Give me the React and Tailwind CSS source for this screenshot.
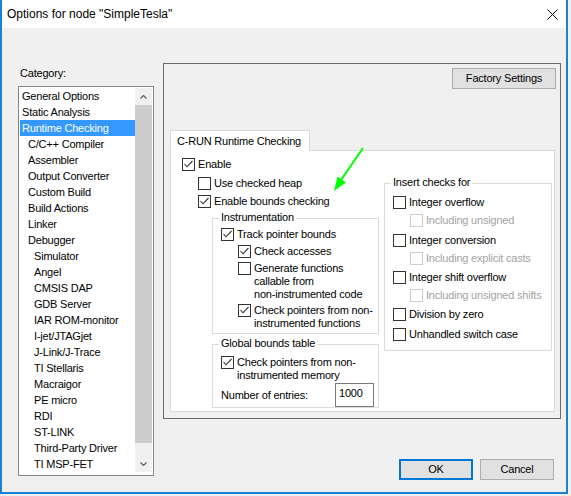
import clsx from 'clsx'

const categories = [
  ['General Options', 0],
  ['Static Analysis', 0],
  ['Runtime Checking', 0],
  ['C/C++ Compiler', 1],
  ['Assembler', 1],
  ['Output Converter', 1],
  ['Custom Build', 1],
  ['Build Actions', 1],
  ['Linker', 1],
  ['Debugger', 1],
  ['Simulator', 2],
  ['Angel', 2],
  ['CMSIS DAP', 2],
  ['GDB Server', 2],
  ['IAR ROM-monitor', 2],
  ['I-jet/JTAGjet', 2],
  ['J-Link/J-Trace', 2],
  ['TI Stellaris', 2],
  ['Macraigor', 2],
  ['PE micro', 2],
  ['RDI', 2],
  ['ST-LINK', 2],
  ['Third-Party Driver', 2],
  ['TI MSP-FET', 2],
]

const indent = ['pl-[2px]', 'pl-[8px]', 'pl-[14px]']

function Box({ checked, disabled }) {
  return (
    <span
      className={clsx(
        'flex h-[13px] w-[13px] shrink-0 items-center justify-center border bg-white',
        disabled ? 'border-[#cccccc]' : 'border-[#333333]'
      )}
    >
      {checked && (
        <svg width="11" height="11" viewBox="0 0 11 11">
          <path d="M1.5 5 L4 7.8 L9.5 2" fill="none" stroke="#333333" strokeWidth="1.1" />
        </svg>
      )}
    </span>
  )
}

function Check({ checked, disabled, className, children }) {
  return (
    <div className={clsx('flex h-[16px] items-center', className)}>
      <Box checked={checked} disabled={disabled} />
      <span className={clsx('ml-[3px] whitespace-nowrap', disabled && 'text-[#a3a3a3]')}>{children}</span>
    </div>
  )
}

// checkbox whose label runs over several lines
function CheckMulti({ checked, className, children }) {
  return (
    <div className={clsx('flex items-start leading-[13px]', className)}>
      <Box checked={checked} />
      <span className="ml-[3px] whitespace-nowrap">{children}</span>
    </div>
  )
}

function Group({ title, className, children }) {
  return (
    <div className={clsx('relative flex flex-col border border-[#dcdcdc]', className)}>
      <span className="absolute left-[6px] -top-[8px] bg-white px-[2px] leading-[13px]">{title}</span>
      {children}
    </div>
  )
}

function Chevron({ down }) {
  return (
    <svg width="7" height="4" viewBox="0 0 7 4" className={down ? 'rotate-180' : ''}>
      <path d="M0.5 3.5 L3.5 0.5 L6.5 3.5" fill="none" stroke="#606060" strokeWidth="1.2" />
    </svg>
  )
}

function CategoryList() {
  return (
    <div className="flex h-[390px] w-[136px] border border-[#828790] bg-white p-[1px]">
      <ul className="w-[115px]">
        {categories.map(([name, level]) => (
          <li
            key={name}
            className={clsx(
              'h-[16px] leading-[16px] whitespace-nowrap',
              indent[level],
              name === 'Runtime Checking' && 'bg-[#3399ff] text-white'
            )}
          >
            {name}
          </li>
        ))}
      </ul>
      <div className="flex h-[384px] w-[17px] flex-col bg-[#f0f0f0]">
        <div className="flex h-[17px] items-center justify-center">
          <Chevron />
        </div>
        <div className="h-[338px] bg-[#cdcdcd]" />
        <div className="flex-1" />
        <div className="flex h-[17px] items-center justify-center">
          <Chevron down />
        </div>
      </div>
    </div>
  )
}

export default function App() {
  return (
    <div className="relative h-[496px] w-[571px] overflow-hidden bg-[#eeeeee] font-['Liberation_Sans',Arial,sans-serif] text-[11px] tracking-[-0.2px] text-black">
      <div className="flex h-[494px] w-[568px] flex-col border-x-2 border-b-2 border-[#1883d7] bg-[#f0f0f0]">
        {/* title bar */}
        <div className="flex h-[28px] shrink-0 items-center justify-between bg-white pl-[5px]">
          <span className="text-[12px] tracking-normal">Options for node "SimpleTesla"</span>
          <svg width="11" height="11" viewBox="0 0 11 11" className="mr-[8px]">
            <path d="M0.5 0.5 L10.5 10.5 M10.5 0.5 L0.5 10.5" stroke="#000" strokeWidth="1" />
          </svg>
        </div>

        <div className="mt-[35px] flex">
          <div className="ml-[16px] flex flex-col">
            <span className="ml-[2px] mt-[3px] leading-[14px]">Category:</span>
            <div className="mt-[6px]">
              <CategoryList />
            </div>
          </div>

          <div className="ml-[9px] flex w-[398px] flex-col">
            <div className="flex h-[356px] flex-col border border-[#696969]">
              <button className="mr-[4px] mt-[4px] h-[21px] w-[104px] self-end border border-[#adadad] bg-[#e1e1e1]">
                Factory Settings
              </button>

              <div className="relative z-10 ml-[6px] mt-[41px] flex h-[21px] w-[140px] items-center border-x border-t border-[#d9d9d9] bg-white pl-[6px]">
                C-RUN Runtime Checking
              </div>
              <div className="-mt-[1px] ml-[6px] flex h-[262px] w-[385px] border border-[#d9d9d9] bg-white">
                <div className="ml-[11px] flex w-[197px] flex-col">
                  <Check checked className="mt-[5px]">Enable</Check>
                  <Check className="ml-[16px] mt-[3px]">Use checked heap</Check>
                  <Check checked className="ml-[16px] mt-[2px]">Enable bounds checking</Check>

                  <Group title="Instrumentation" className="ml-[30px] mt-[9px] h-[116px] w-[167px]">
                    <Check checked className="ml-[8px] mt-[7px]">Track pointer bounds</Check>
                    <Check checked className="ml-[25px] mt-[1px]">Check accesses</Check>
                    <CheckMulti className="ml-[25px] mt-[3px]">
                      Generate functions
                      <br />
                      callable from
                      <br />
                      non-instrumented code
                    </CheckMulti>
                    <CheckMulti checked className="ml-[25px] mt-[3px]">
                      Check pointers from non-
                      <br />
                      instrumented functions
                    </CheckMulti>
                  </Group>

                  <Group title="Global bounds table" className="ml-[30px] mt-[10px] h-[64px] w-[167px]">
                    <CheckMulti checked className="ml-[8px] mt-[11px]">
                      Check pointers from non-
                      <br />
                      instrumented memory
                    </CheckMulti>
                    <div className="ml-[8px] mr-[4px] mt-[1px] flex h-[24px] items-center justify-between">
                      <span>Number of entries:</span>
                      <div className="h-[24px] w-[39px] border border-[#7a7a7a] bg-white pl-[3px] pt-[2px] leading-[14px]">
                        1000
                      </div>
                    </div>
                  </Group>
                </div>

                <Group title="Insert checks for" className="ml-[5px] mt-[32px] h-[168px] w-[168px]">
                  <Check className="ml-[8px] mt-[10px]">Integer overflow</Check>
                  <Check disabled className="ml-[25px] mt-[2px]">Including unsigned</Check>
                  <Check className="ml-[8px] mt-[4px]">Integer conversion</Check>
                  <Check disabled className="ml-[25px] mt-[2px]">Including explicit casts</Check>
                  <Check className="ml-[8px] mt-[3px]">Integer shift overflow</Check>
                  <Check disabled className="ml-[25px] mt-[2px]">Including unsigned shifts</Check>
                  <Check className="ml-[8px] mt-[3px]">Division by zero</Check>
                  <Check className="ml-[8px] mt-[4px]">Unhandled switch case</Check>
                </Group>
              </div>
            </div>

            <div className="mr-[7px] mt-[40px] flex justify-end gap-[7px]">
              <button className="h-[21px] w-[74px] border-2 border-[#0078d7] bg-[#e1e1e1]">OK</button>
              <button className="h-[21px] w-[74px] border border-[#adadad] bg-[#e1e1e1]">Cancel</button>
            </div>
          </div>
        </div>
      </div>

      {/* green pointer arrow */}
      <svg className="pointer-events-none absolute left-0 top-0" width="571" height="496">
        <line x1="363" y1="148" x2="341" y2="180" stroke="#00ff00" strokeWidth="2" />
        <polygon points="334,191 346,182.5 337.5,176.5" fill="#00ff00" />
      </svg>
    </div>
  )
}
